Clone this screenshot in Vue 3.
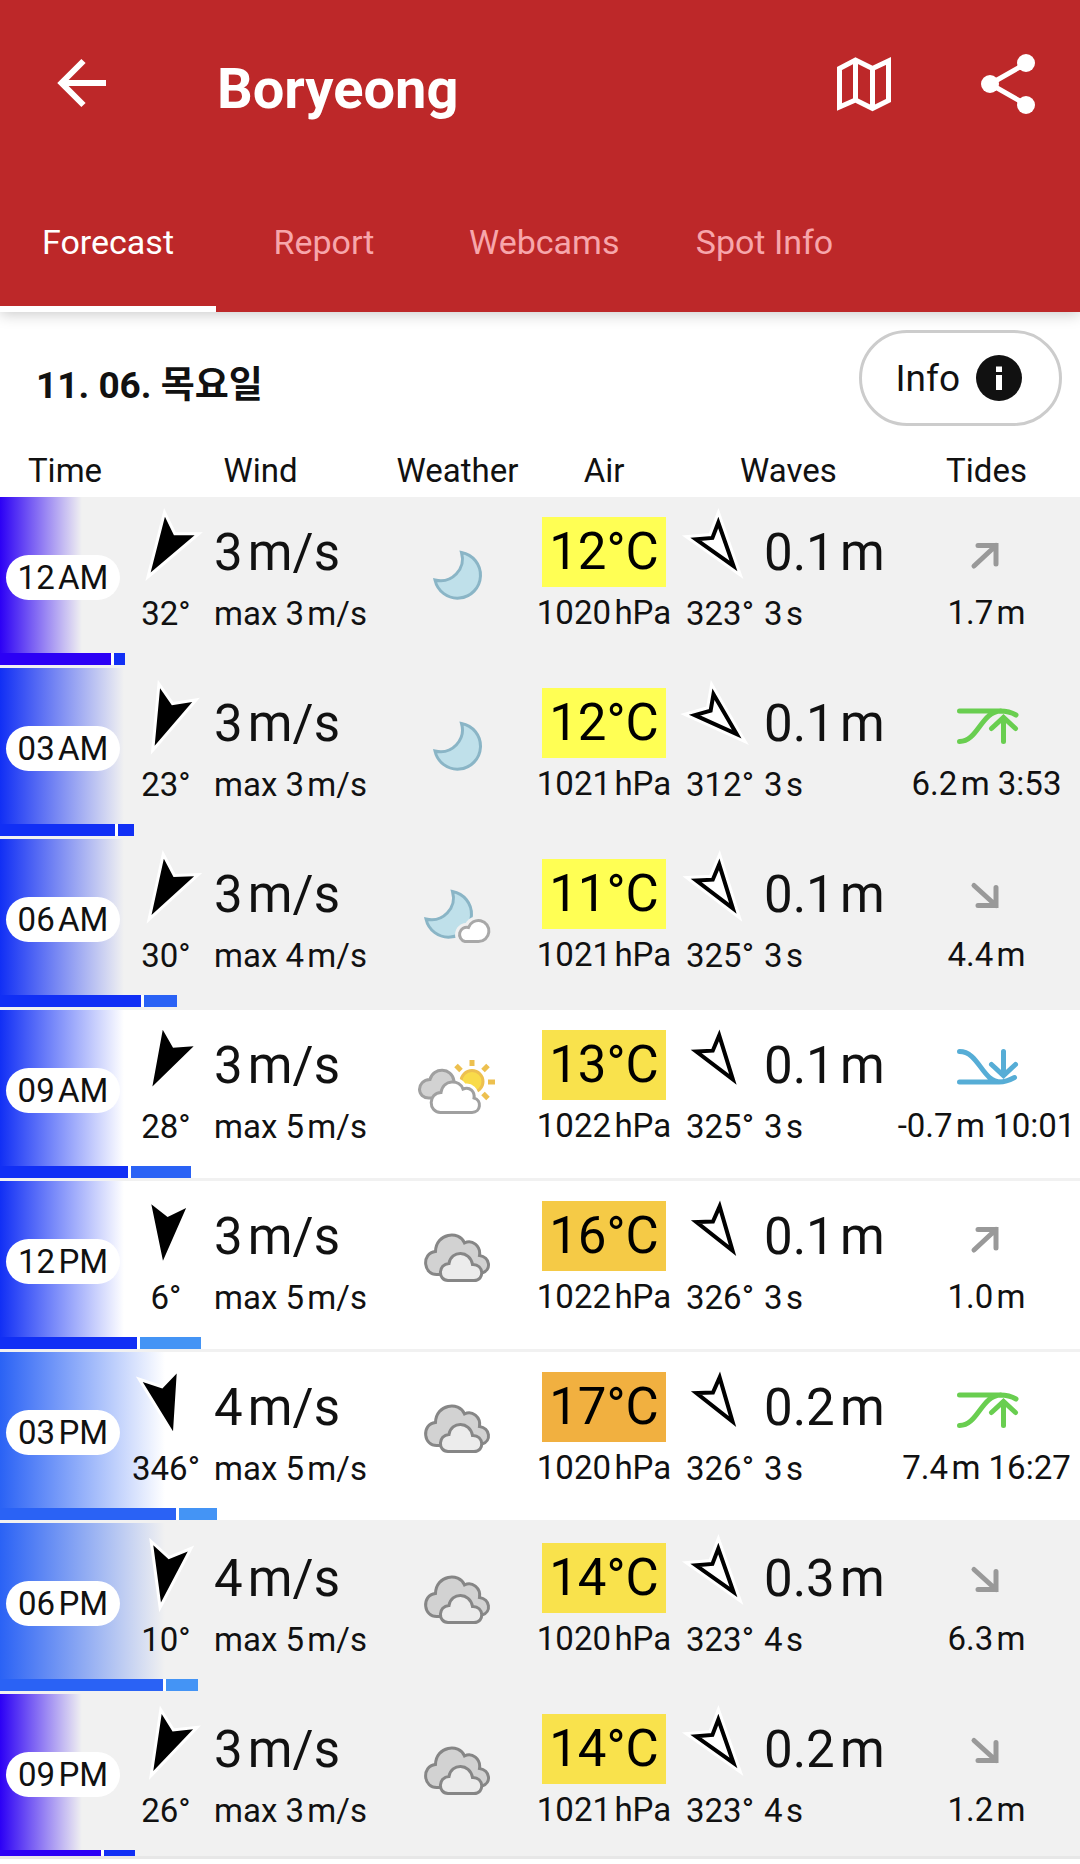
<template>
  <div class="app">
    <header class="app-header">
      <div class="app-bar">
        <button class="icon-btn" type="button" aria-label="Back">
          <svg viewBox="0 0 60 60"><path d="M54 29H10M31.500 7 9.500 29 31.500 51" class="line-thick" /></svg>
        </button>
        <h1 class="title">Boryeong</h1>
        <button class="icon-btn push" type="button" aria-label="Map">
          <svg viewBox="0 0 60 60">
            <path d="M5.500 14.500 21.500 6 38.500 14.500 54.500 7V46.500L38.500 54.500 21.500 46 5.500 53Z" class="line" />
            <path d="M21.500 6V46M38.500 14.500V54" class="line" />
          </svg>
        </button>
        <button class="icon-btn" type="button" aria-label="Share">
          <svg viewBox="0 0 60 60">
            <path d="M48 9.500 12 30 48 50.500" class="line" />
            <circle cx="48" cy="9" r="9" fill="#fff" />
            <circle cx="12" cy="30" r="9" fill="#fff" />
            <circle cx="48" cy="51" r="9" fill="#fff" />
          </svg>
        </button>
      </div>
      <nav class="tabs">
        <button
          v-for="tab in tabs"
          :key="tab"
          type="button"
          class="tab"
          :class="{ active: tab === activeTab }"
          @click="activeTab = tab"
        >{{ tab }}</button>
      </nav>
    </header>

    <main class="content">
      <div class="day-bar">
        <h2 class="day">11. 06. 목요일</h2>
        <button class="info-btn" type="button">
          Info
          <svg viewBox="0 0 46 46" class="info-icon">
            <circle cx="23" cy="23" r="23" fill="#111" />
            <path d="M20 11.500h6v5.500h-6zM20 20h6v15h-6z" fill="#fff" />
          </svg>
        </button>
      </div>

      <table class="forecast">
        <colgroup>
          <col class="c-time" /><col class="c-wind" /><col class="c-weather" />
          <col class="c-air" /><col class="c-waves" /><col />
        </colgroup>
        <thead>
          <tr>
            <th v-for="h in headings" :key="h" scope="col">{{ h }}</th>
          </tr>
        </thead>
        <tbody>
          <tr
            v-for="row in rows"
            :key="row.time"
            :class="[{ night: row.night }, 'level-' + row.level]"
          >
            <td class="time-cell">
              <span class="time-pill">{{ row.time }}</span>
              <!-- average and gust strength -->
              <div class="bars">
                <span class="bar" :style="{ width: row.bar + 'px', background: colors[row.level] }"></span>
                <span class="bar" :style="{ width: row.gustBar + 'px', background: colors[row.gustLevel] }"></span>
              </div>
            </td>
            <td>
              <div class="reading wind">
                <svg viewBox="-36 -36 72 72" class="arrow">
                  <g :transform="`rotate(${row.windDir})`">
                    <path d="M0 29 17.500-26 0-15-17.500-26Z" class="halo" />
                    <path d="M0 29 17.500-26 0-15-17.500-26Z" />
                  </g>
                </svg>
                <span class="big">{{ row.wind }}&#8202;m/s</span>
                <span class="small deg">{{ row.windDir }}°</span>
                <span class="small">max {{ row.gust }}&#8202;m/s</span>
              </div>
            </td>
            <td>
              <svg viewBox="0 0 80 60" class="weather">
                <template v-if="row.sky === 'moon' || row.sky === 'moon-cloud'">
                  <path
                    d="M43.500 8.500A23 23 0 1 1 17 36A22 22 0 0 0 43.500 8.500Z"
                    class="moon"
                    :transform="row.sky === 'moon' ? null : 'translate(-9 -3)'"
                  />
                  <g v-if="row.sky === 'moon-cloud'">
                    <path :d="smallCloud" class="gap" />
                    <path :d="smallCloud" fill="#fff" stroke="#a8a8a8" stroke-width="3" />
                  </g>
                </template>
                <template v-else-if="row.sky === 'sun'">
                  <path
                    d="M54 9V3M70 25H77M65 13.500 70 8.500M43 13.500 38 8.500M65 36.500 70 41.500"
                    stroke="#edc04f" stroke-width="5" fill="none"
                  />
                  <circle cx="54" cy="24.500" r="11" fill="#f9db4a" stroke="#edc04f" stroke-width="3" />
                  <path :d="frontCloud" class="gap" />
                  <path
                    d="M12 41C-2 42-2 23 12 22.500C15 10 34 10 36 24L36 41Z"
                    fill="#d2d2d2" stroke="#a0a0a0" stroke-width="3"
                  />
                  <path :d="frontCloud" fill="#fff" stroke="#a0a0a0" stroke-width="3" />
                </template>
                <g v-else stroke="#868686" stroke-width="3">
                  <path
                    d="M20 46.500C5 48 3 25 17.500 23.500C18 5 41 2 46.500 15C54 11 63 18 61.500 27.500C72 29 74 42 64 45Z"
                    fill="#d2d2d2"
                  />
                  <path
                    d="M30 52.500C19.500 52 20 36 31 35.500C33 22 52 22 54.500 36.500C66 36 67 52.500 56 52.500Z"
                    fill="#ececec"
                  />
                </g>
              </svg>
            </td>
            <td class="center">
              <span class="temp big" :class="'t' + row.temp">{{ row.temp }}°C</span>
              <span class="small">{{ row.pressure }}&#8202;hPa</span>
            </td>
            <td>
              <div class="reading waves">
                <svg viewBox="-36 -36 72 72" class="arrow">
                  <g :transform="`rotate(${row.waveDir})`">
                    <path d="M0 29 17.500-26 0-15-17.500-26Z" class="halo" />
                    <path d="M0 22.400 14-21.400 0-12.600-14-21.400Z" fill="#fff" stroke="#000" stroke-width="4" stroke-miterlimit="10" />
                  </g>
                </svg>
                <span class="big">{{ row.waves }}&#8202;m</span>
                <span class="small deg">{{ row.waveDir }}°</span>
                <span class="small">{{ row.period }}&#8202;s</span>
              </div>
            </td>
            <td class="center">
              <svg viewBox="0 0 64 70" class="tide" :class="row.tide">
                <path :d="tidePaths[row.tide]" />
              </svg>
              <span class="small">{{ row.tideLevel }}&#8202;m{{ row.tideTime ? ' ' + row.tideTime : '' }}</span>
            </td>
          </tr>
        </tbody>
      </table>
    </main>
    <footer class="bottom-edge"></footer>
  </div>
</template>

<script setup>
import { ref } from 'vue'

const tabs = ['Forecast', 'Report', 'Webcams', 'Spot Info']
const activeTab = ref('Forecast')
const headings = ['Time', 'Wind', 'Weather', 'Air', 'Waves', 'Tides']

// wind strength colors, weakest first
const colors = ['#2c00f5', '#112ff5', '#2a62f5', '#4494f5']

const smallCloud = 'M47 55.500H60.500A10.500 10.500 0 1 0 50.500 41.500A7.200 7.200 0 0 0 47 55.500Z'
const frontCloud = 'M22.500 55.500C10 55 10 36 23 35.500C25 22 42 22 45 32C52 29 57 35 56 41C64 43 63 55.500 54 55.500Z'

const tidePaths = {
  rising: 'M19 49 41 28.500M23 28.500H41V47',
  falling: 'M19 26.500 41 46.500M23 46.500H41V28.500',
  high: 'M4.500 23H45C52 23 56 24 61 27M4.500 53.500C23 53.500 26 23.500 46 23M48.500 53.500V30M36.500 40.500 48.500 29.500 60.500 40.500',
  low: 'M4.500 52H44C51 52 55 50 59.500 47.500M4.500 21.500C24 21.500 27 52 46 52M48.500 21.500V45M36.500 34.500 48.500 45.500 60.500 34.500'
}

const rows = [
  { time: '12\u200aAM', night: true, level: 0, bar: 111, gustLevel: 1, gustBar: 11, windDir: 32, wind: 3, gust: 3, sky: 'moon', temp: 12, pressure: 1020, waveDir: 323, waves: '0.1', period: 3, tide: 'rising', tideLevel: '1.7' },
  { time: '03\u200aAM', night: true, level: 1, bar: 115, gustLevel: 1, gustBar: 16, windDir: 23, wind: 3, gust: 3, sky: 'moon', temp: 12, pressure: 1021, waveDir: 312, waves: '0.1', period: 3, tide: 'high', tideLevel: '6.2', tideTime: '3:53' },
  { time: '06\u200aAM', night: true, level: 1, bar: 141, gustLevel: 2, gustBar: 33, windDir: 30, wind: 3, gust: 4, sky: 'moon-cloud', temp: 11, pressure: 1021, waveDir: 325, waves: '0.1', period: 3, tide: 'falling', tideLevel: '4.4' },
  { time: '09\u200aAM', night: false, level: 1, bar: 128, gustLevel: 2, gustBar: 60, windDir: 28, wind: 3, gust: 5, sky: 'sun', temp: 13, pressure: 1022, waveDir: 325, waves: '0.1', period: 3, tide: 'low', tideLevel: '-0.7', tideTime: '10:01' },
  { time: '12\u200aPM', night: false, level: 1, bar: 137, gustLevel: 3, gustBar: 61, windDir: 6, wind: 3, gust: 5, sky: 'clouds', temp: 16, pressure: 1022, waveDir: 326, waves: '0.1', period: 3, tide: 'rising', tideLevel: '1.0' },
  { time: '03\u200aPM', night: false, level: 2, bar: 176, gustLevel: 3, gustBar: 38, windDir: 346, wind: 4, gust: 5, sky: 'clouds', temp: 17, pressure: 1020, waveDir: 326, waves: '0.2', period: 3, tide: 'high', tideLevel: '7.4', tideTime: '16:27' },
  { time: '06\u200aPM', night: true, level: 2, bar: 163, gustLevel: 3, gustBar: 32, windDir: 10, wind: 4, gust: 5, sky: 'clouds', temp: 14, pressure: 1020, waveDir: 323, waves: '0.3', period: 4, tide: 'falling', tideLevel: '6.3' },
  { time: '09\u200aPM', night: true, level: 0, bar: 101, gustLevel: 1, gustBar: 31, windDir: 26, wind: 3, gust: 3, sky: 'clouds', temp: 14, pressure: 1021, waveDir: 323, waves: '0.2', period: 4, tide: 'falling', tideLevel: '1.2' }
]
</script>

<style>
body { margin: 0; background: #fff; }
</style>

<style scoped>
.app {
  display: flex;
  flex-direction: column;
  height: 100vh;
  color: #111;
  font-family: Roboto, "Noto Sans CJK KR", sans-serif;
  font-size: 33px;
}
button {
  font-family: inherit;
  border: none;
  background: none;
  padding: 0;
  cursor: pointer;
}
svg { display: block; }

/* Header */
.app-header {
  flex: none;
  position: relative;
  z-index: 2;
  background: #bd2829;
  box-shadow: 0 2px 14px rgba(0,0,0,.22);
}
.app-bar {
  display: flex;
  align-items: flex-start;
  padding: 54px 42px 44px 52px;
}
.icon-btn { width: 60px; height: 60px; }
.icon-btn svg { width: 60px; height: 60px; overflow: visible; }
.icon-btn + .icon-btn { margin-left: 84px; }
.push { margin-left: auto; }
.line, .line-thick { fill: none; stroke: #fff; stroke-width: 5; }
.line-thick { stroke-width: 6; }
.title {
  margin: 0 0 0 105px;
  font-size: 56px;
  font-weight: 700;
  line-height: 70px;
  color: #fff;
}
.tabs { display: flex; }
.tab {
  min-width: 20%;
  height: 144px;
  padding: 10px 37px 0;
  border-bottom: 6px solid transparent;
  font-size: 34px;
  color: #f7a6ab;
}
.tab.active { color: #fff; border-bottom-color: #fff; }

/* Day bar */
.content { flex: 1; min-height: 0; overflow: hidden; }
.day-bar {
  display: flex;
  justify-content: space-between;
  align-items: flex-end;
  padding: 18px 18px 18px 36px;
}
.day {
  margin: 0;
  font-size: 37px;
  font-weight: 700;
  line-height: 80px;
}
.info-btn {
  display: flex;
  align-items: center;
  gap: 16px;
  height: 96px;
  padding: 0 37px 0 34px;
  border: 3px solid #ccc;
  border-radius: 48px;
  font-size: 37px;
  color: #111;
}
.info-icon { width: 46px; height: 46px; }

/* Forecast table */
.forecast {
  width: 100%;
  table-layout: fixed;
  border-collapse: separate;
  border-spacing: 0;
}
.c-time { width: 130px; }
.c-wind { width: 261px; }
.c-weather { width: 133px; }
.c-air { width: 160px; }
.c-waves { width: 209px; }
th {
  padding: 0;
  font-weight: 400;
  line-height: 53px;
}
td {
  height: 168px;
  padding: 0;
  border-bottom: 3px solid #f1f1f1;
  vertical-align: top;
  white-space: nowrap;
}
tbody tr { --row-bg: #fff; background-color: var(--row-bg); background-repeat: no-repeat; }
tbody tr.night { --row-bg: #f1f1f1; }
.level-0 { background-image: linear-gradient(90deg, #2c00f5, rgba(44,0,245,0) 82px); }
.level-1 { background-image: linear-gradient(90deg, #112ff5, rgba(17,47,245,0) 124px); }
.level-2 { background-image: linear-gradient(90deg, #2a62f5, rgba(42,98,245,0) 165px); }

.time-cell { position: relative; z-index: 1; }
.time-pill {
  display: block;
  margin: 58px 10px 0 6px;
  border-radius: 23px;
  background: #fff;
  line-height: 45px;
  text-align: center;
}
.bars {
  position: absolute;
  left: 0;
  bottom: 0;
  display: flex;
  gap: 3px;
  background: #fff;
}
.bar { height: 12px; }

.big { font-size: 51px; line-height: 70px; }
.small { line-height: 52px; }
.reading {
  display: grid;
  grid-template-columns: 72px auto;
  justify-content: start;
  padding-top: 21px;
}
.wind { column-gap: 12px; }
.waves { column-gap: 8px; }
.deg { justify-self: center; }
.arrow { width: 72px; height: 72px; margin: -6px 0 4px; overflow: visible; }
.halo { fill: #fff; stroke: #fff; stroke-width: 6; stroke-miterlimit: 10; }

.weather { width: 80px; height: 60px; margin: 47px auto 0; overflow: visible; }
.moon { fill: #bfe0ea; stroke: #8ab5c6; stroke-width: 3; }
.gap { fill: var(--row-bg); stroke: var(--row-bg); stroke-width: 9; }

.center { padding-top: 20px; text-align: center; height: 148px; }
.center .small { display: block; }
.temp {
  display: block;
  width: 124px;
  margin: 0 auto;
  color: #000;
}
.t11, .t12 { background: #ffff54; }
.t13, .t14 { background: #f9e24c; }
.t16 { background: #f5ca46; }
.t17 { background: #f1b040; }

.tide {
  width: 64px;
  height: 70px;
  margin: 0 auto;
  fill: none;
  stroke: #999;
  stroke-width: 5;
  stroke-linecap: round;
}
.tide.high { stroke: #69ce50; }
.tide.low { stroke: #56add6; }

.bottom-edge {
  flex: none;
  height: 5px;
  border-top: 3px solid #e7e7e7;
  background: #fff;
}
</style>
